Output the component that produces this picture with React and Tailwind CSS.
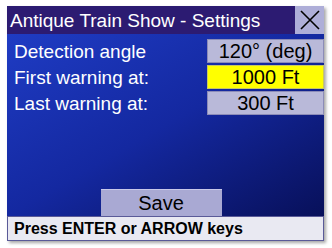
import React from 'react';

function ValueBox({ children, highlight }) {
    return (
        <div className={
            "w-[117px] h-[24px] flex items-center justify-center text-[20px] leading-none text-black border " +
            (highlight ? "bg-[#ffff00] border-[#c8c860]" : "bg-[#b9b9d9] border-[#8c8cb8]")
        }>
            {children}
        </div>
    );
}

function Row({ label, value, highlight }) {
    return (
        <div className="flex items-center justify-between h-[26px]">
            <span className="text-white text-[19px] leading-none pl-[7px]">{label}</span>
            <ValueBox highlight={highlight}>{value}</ValueBox>
        </div>
    );
}

export default function App() {
    return (
        <div className="w-[332px] h-[248px] bg-white pt-[6px] pl-[7px]" style={{ fontFamily: '"Liberation Sans", Arial, sans-serif' }}>
            <div className="w-[317px] h-[235px] flex flex-col shadow-[2px_2px_3px_rgba(0,0,0,0.35)]">
                {/* Title bar */}
                <div className="flex h-[28px] bg-[#2c1b72]">
                    <div className="flex-1 flex items-center pl-[3px] text-white text-[19px] leading-none">
                        Antique Train Show - Settings
                    </div>
                    <div className="w-[29px] h-[28px] bg-[#aeaed8] flex items-center justify-center">
                        <svg width="22" height="22" viewBox="0 0 22 22">
                            <path d="M2 2 L20 20 M20 2 L2 20" stroke="#000" strokeWidth="1.6" />
                        </svg>
                    </div>
                </div>

                {/* Body */}
                <div className="flex-1 flex flex-col bg-gradient-to-br from-[#1f3cc4] via-[#1428a0] to-[#08105a] pt-[4px]">
                    <Row label="Detection angle" value="120° (deg)" />
                    <Row label="First warning at:" value="1000 Ft" highlight />
                    <Row label="Last warning at:" value="300 Ft" />
                    <div className="flex-1" />
                    <div className="flex justify-center pr-[9px]">
                        <div className="w-[121px] h-[27px] bg-[#a9a9d3] border-t border-[#c8c8e8] flex items-center justify-center text-[20px] leading-none text-black">
                            Save
                        </div>
                    </div>
                </div>

                {/* Status bar */}
                <div className="h-[25px] bg-[#e9e9f2] border border-[#5a5a98] flex items-center pl-[6px] text-[16px] leading-none font-bold text-black">
                    Press ENTER or ARROW keys
                </div>
            </div>
        </div>
    );
}
